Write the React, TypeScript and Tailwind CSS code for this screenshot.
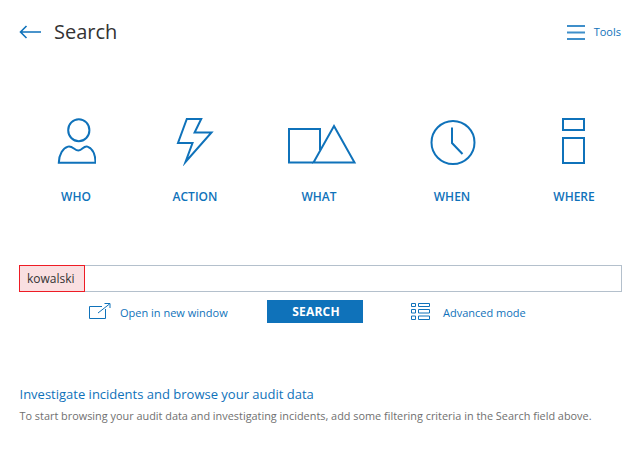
import React from "react";

const blue = "#0f72ba";

function Who() {
  return (
    <svg width="40" height="48" viewBox="0 0 40 48" fill="none" stroke={blue} strokeWidth="2">
      <ellipse cx="22.8" cy="12.2" rx="10.6" ry="11" />
      <path d="M2.8 44.8H39.6C39.4 37 36.5 30.5 31.5 28.6C27.5 27.2 26.5 32.5 22.5 32.5C18.5 32.5 16.5 27.4 12 28.6C7 30 3 36 2.8 44.8Z" />
    </svg>
  );
}
function Action() {
  return (
    <svg width="40" height="50" viewBox="0 0 40 50" fill="none" stroke={blue} strokeWidth="2" strokeMiterlimit="10">
      <path d="M11.8 3H26.2L19.6 16.5H36.5L10.5 46L17.5 27H3Z" />
    </svg>
  );
}
function What() {
  return (
    <svg width="76" height="50" viewBox="0 0 76 50" fill="none" stroke={blue} strokeWidth="2" strokeMiterlimit="10" className="-mx-[6px]">
      <path d="M39 34V13H8V46.5H32" />
      <path d="M53 10L73.5 46.5H32.5Z" />
    </svg>
  );
}
function When() {
  return (
    <svg width="48" height="48" viewBox="0 0 48 48" fill="none" stroke={blue} strokeWidth="2">
      <circle cx="25" cy="24.5" r="21.5" />
      <path d="M24 9.5V25L34.5 36" />
    </svg>
  );
}
function Where() {
  return (
    <svg width="24" height="48" viewBox="0 0 24 48" fill="none" stroke={blue} strokeWidth="2">
      <rect x="1" y="1" width="21" height="11" />
      <rect x="1" y="20" width="21" height="25" />
    </svg>
  );
}

function Category({ icon, label }: { icon: React.ReactNode; label: string }) {
  return (
    <div className="w-[100px] flex flex-col items-center">
      <div className="h-[50px] flex items-end">{icon}</div>
      <div className="mt-[23px] text-[12px] leading-[16px] font-semibold text-[#0f72ba]">{label}</div>
    </div>
  );
}

export default function App() {
  return (
    <div className="w-[640px] h-[450px] bg-white overflow-hidden" style={{ fontFamily: '"Open Sans", sans-serif' }}>
      <header className="flex items-center justify-between pl-[19px] pr-[19px] pt-[18px] h-[46px]">
        <div className="flex items-center gap-[13px]">
          <svg width="22" height="14" viewBox="0 0 22 14" fill="none" stroke={blue} strokeWidth="1.6">
            <path d="M22 7H1.5M7.5 1L1.5 7L7.5 13" />
          </svg>
          <h1 className="text-[20px] leading-[28px] text-[#333333]">Search</h1>
        </div>
        <div className="flex items-center gap-[9px]">
          <svg width="18" height="15" viewBox="0 0 18 15" stroke="#3f8fca" strokeWidth="2">
            <path d="M0 1H18M0 7.5H18M0 14H18" />
          </svg>
          <span className="text-[11px] leading-[16px] text-[#0f72ba]">Tools</span>
        </div>
      </header>

      <section className="flex pl-[26px] pt-[70px]">
        <Category icon={<Who />} label="WHO" />
        <div className="ml-[19px]"><Category icon={<Action />} label="ACTION" /></div>
        <div className="ml-[24px]"><Category icon={<What />} label="WHAT" /></div>
        <div className="ml-[33px]"><Category icon={<When />} label="WHEN" /></div>
        <div className="ml-[22px]"><Category icon={<Where />} label="WHERE" /></div>
      </section>

      <div className="mx-[19px] mt-[60px] w-[603px] h-[27px] border border-[#b4c0cc] flex">
        <div className="-m-px h-[27px] w-[66px] border border-[#ee1c25] bg-[#f9dfe1] text-[12px] leading-[26px] pl-[7px] text-[#333333]">
          kowalski
        </div>
      </div>

      <div className="flex items-center h-[23px] mt-[8px] pl-[89px]">
        <svg width="22" height="17" viewBox="0 0 22 17" fill="none" stroke={blue} strokeWidth="1">
          <path d="M16.5 6V15.5H0.5V3.5H13" />
          <path d="M9 10L20.5 1M15.5 0.5H21V5" />
        </svg>
        <span className="ml-[9px] w-[147px] text-[11px] leading-[16px] text-[#0f72ba] translate-y-[1px]">Open in new window</span>
        <button className="w-[96px] h-[23px] bg-[#0f72ba] text-white text-[12px] font-bold tracking-[0.2px] pl-[2px]">SEARCH</button>
        <svg className="ml-[48px]" width="19" height="17" viewBox="0 0 19 17" fill="none" stroke={blue} strokeWidth="1">
          <path d="M0.5 0.5H4.5V3.5H0.5ZM7.5 0.5H18.5V3.5H7.5ZM0.5 6.5H4.5V10H0.5ZM7.5 6.5H18.5V10H7.5ZM0.5 13H4.5V16.5H0.5ZM7.5 13H18.5V16.5H7.5Z" />
        </svg>
        <span className="ml-[13px] text-[11px] leading-[16px] text-[#0f72ba] translate-y-[1px]">Advanced mode</span>
      </div>

      <section className="pl-[19.5px] pt-[60px]">
        <h2 className="text-[13px] leading-[22px] text-[#0f72ba]">Investigate incidents and browse your audit data</h2>
        <p className="mt-[3px] text-[10.88px] leading-[16px] text-[#707070] whitespace-nowrap">
          To start browsing your audit data and investigating incidents, add some filtering criteria in the Search field above.
        </p>
      </section>
    </div>
  );
}
